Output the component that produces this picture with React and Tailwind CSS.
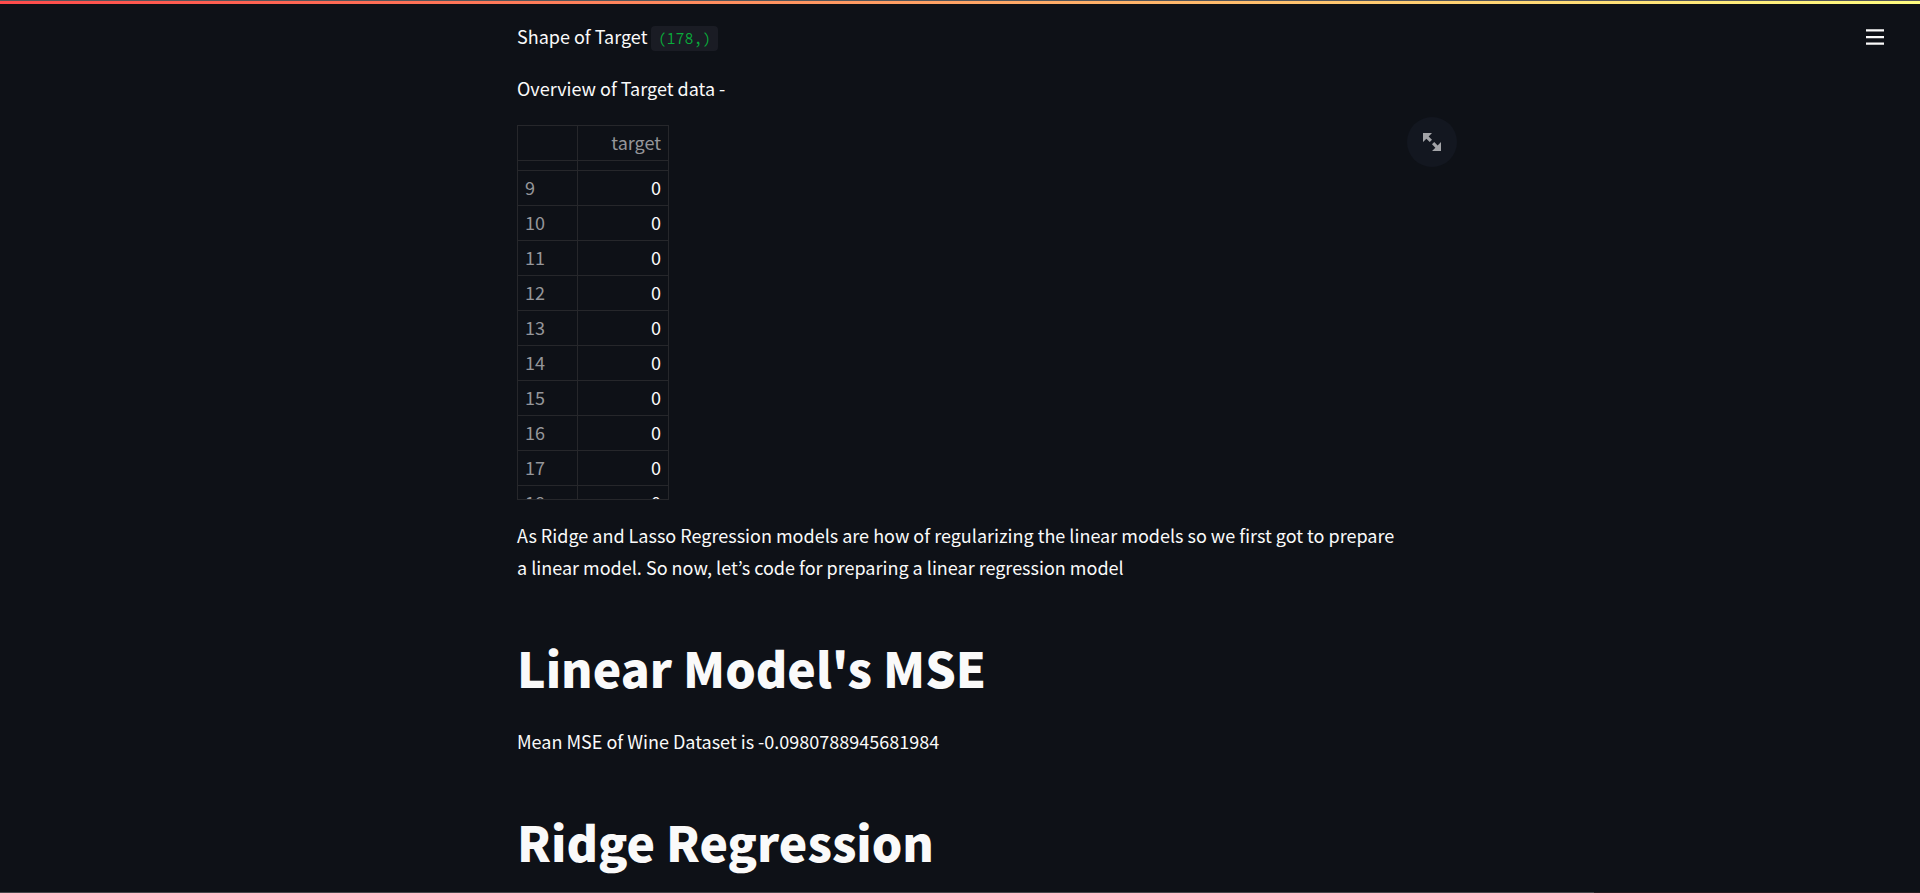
const rows = [9, 10, 11, 12, 13, 14, 15, 16, 17, 18];

const cell = "box-border border-t border-l border-[#26272b] px-[7px] pt-0 pb-[2px] font-normal leading-none";

function ExpandIcon() {
  return (
    <svg viewBox="0 0 8 8" className="size-[18px] fill-[#a3a4a8]" aria-hidden="true">
      <path d="M0 0v4l1.5-1.5 1.5 1.5 1-1-1.5-1.5 1.5-1.5h-4zm5 4l-1 1 1.5 1.5-1.5 1.5h4v-4l-1.5 1.5-1.5-1.5z" />
    </svg>
  );
}

function MenuIcon() {
  return (
    <svg viewBox="0 0 18 16" className="h-4 w-[18px] fill-[#fafafa]" aria-hidden="true">
      <path d="M0 .2h18v2.3H0zM0 7h18v2.3H0zM0 13.5h18v2.3H0z" />
    </svg>
  );
}

function DataFrame() {
  return (
    <div className="h-[375px] overflow-hidden border-r border-b border-[#26272b]">
      <table className="border-separate border-spacing-0 text-[18px] text-[#fafafa]">
        <thead>
          <tr className="h-[35px] text-[#95969a]">
            <th className={`${cell} w-[60px]`} aria-label="index" />
            <th className={`${cell} w-[91px] text-right`}>target</th>
          </tr>
        </thead>
        <tbody>
          <tr className="h-[10px]">
            <td className={cell} />
            <td className={cell} />
          </tr>
          {rows.map((n) => (
            <tr key={n} className="h-[35px]">
              <th scope="row" className={`${cell} text-left text-[#95969a]`}>{n}</th>
              <td className={`${cell} text-right`}>0</td>
            </tr>
          ))}
        </tbody>
      </table>
    </div>
  );
}

function Title({ children }) {
  return <h1 className="pt-[31px] pb-[5px] text-[48px] leading-[66px] font-black">{children}</h1>;
}

export default function App() {
  return (
    <div className="relative flex h-screen flex-col overflow-hidden border-t border-[#55565a] bg-[#0e1117] font-['Noto_Sans_CJK_KR',sans-serif] text-[18px] leading-8 text-[#fafafa]">
      <div className="h-[3px] shrink-0 bg-[linear-gradient(90deg,#ff4b4b,#fffd80)]" />
      <button aria-label="Main menu" className="absolute top-4 right-[25px] flex size-10 items-center justify-center">
        <MenuIcon />
      </button>
      <main className="min-h-0 grow overflow-hidden pr-[6px]">
        <div className="mx-auto flex max-w-[880px] flex-col gap-5 pt-4">
          <p>
            Shape of Target{" "}
            <code className="rounded bg-[#1a1c24] px-[6px] py-[3px] font-['Source_Code_Pro','Roboto_Mono','DejaVu_Sans_Mono',monospace] text-[15px] leading-none text-[#09ab3b]">(178,)</code>
          </p>
          <p>Overview of Target data -</p>
          <div className="relative mt-px -mb-px flex">
            <DataFrame />
            <button aria-label="View fullscreen" className="absolute -top-2 -right-[60px] flex size-[50px] items-center justify-center rounded-full bg-[#131720]">
              <ExpandIcon />
            </button>
          </div>
          <p>
            As Ridge and Lasso Regression models are how of regularizing the linear models so we first got to prepare
            a linear model. So now, let’s code for preparing a linear regression model
          </p>
          <Title>Linear Model's MSE</Title>
          <p>Mean MSE of Wine Dataset is -0.0980788945681984</p>
          <Title>Ridge Regression</Title>
        </div>
      </main>
      <div className="flex h-px shrink-0 bg-[#251d22]">
        <div className="w-[83%] bg-[#45464a]" />
      </div>
    </div>
  );
}
